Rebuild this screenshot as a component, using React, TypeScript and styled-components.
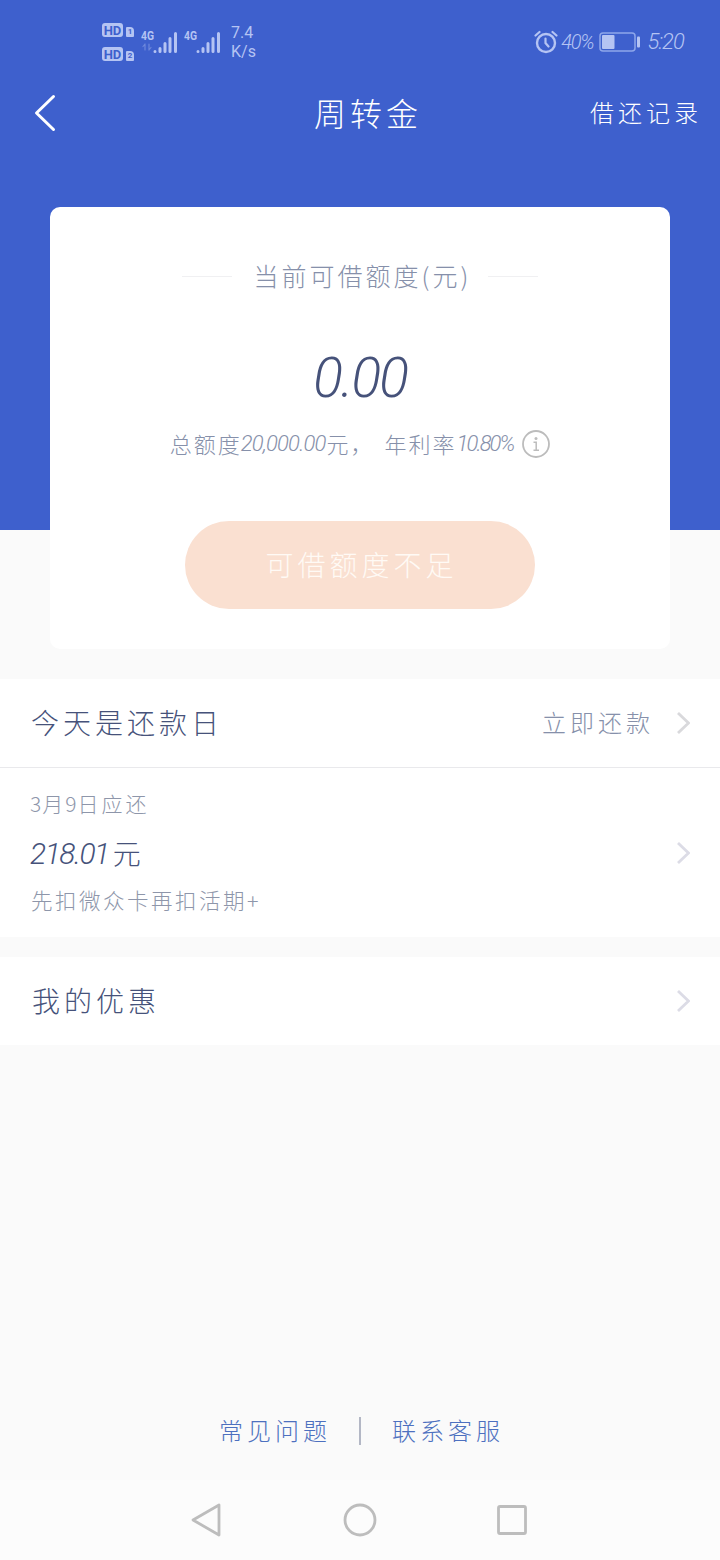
import React from "react";
import styled, { createGlobalStyle } from "styled-components";

const hand = '"Noto Sans CJK SC", sans-serif';

const GlobalStyle = createGlobalStyle`
  * { box-sizing: border-box; }
  body { margin: 0; background: #fafafa; font-family: ${hand}; font-weight: 300; }
  button { border: 0; background: none; padding: 0; font: inherit; color: inherit; }
  svg { display: block; flex: none; }
`;

const Page = styled.div`
  width: 720px;
  height: 1560px;
  display: flex;
  flex-direction: column;
  overflow: hidden;
`;

const Hero = styled.section`
  height: 679px;
  flex: none;
  background: linear-gradient(#3e60cd 530px, #fafafa 530px);
`;

/* A run of text: font size, tracking after every glyph, and space before it. */
const Text = styled.span<{ $size: number; $track?: number; $color?: string; $before?: number }>`
  font-size: ${(p) => p.$size}px;
  letter-spacing: ${(p) => p.$track ?? 0}px;
  color: ${(p) => p.$color ?? "inherit"};
  margin-left: ${(p) => p.$before ?? 0}px;
  padding-bottom: 2px;
  line-height: 1;
  white-space: pre;
`;

const Digits = styled(Text)`
  font-family: Roboto, sans-serif;
  font-style: italic;
  padding-bottom: 0;
`;

const StatusBar = styled.div`
  height: 80px;
  padding: 4px 36px 0 102px;
  display: flex;
  align-items: center;
  justify-content: space-between;
  color: #b5c4f3;
`;

const StatusGroup = styled.div`
  display: flex;
  align-items: center;
`;

const SignalGroup = styled.div`
  display: flex;
  gap: 6px;
`;

const Simcards = styled.div`
  display: flex;
  flex-direction: column;
  gap: 10px;
  margin-right: 7px;
`;

const SimRow = styled.div`
  display: flex;
  align-items: flex-end;
  gap: 3px;
`;

const Badge = styled.span<{ $small?: boolean }>`
  width: ${(p) => (p.$small ? 8 : 21)}px;
  height: ${(p) => (p.$small ? 10 : 14)}px;
  border-radius: ${(p) => (p.$small ? "1px 4px 1px 1px" : "3px")};
  background: #b5c4f3;
  color: #3e60cd;
  font: 700 ${(p) => (p.$small ? 8 : 13)}px/1 Roboto, sans-serif;
  display: flex;
  align-items: center;
  justify-content: center;
`;

const Speed = styled.div`
  margin-left: 10px;
  font: 400 16px/19px Roboto, sans-serif;
`;

const NavBar = styled.header`
  height: 68px;
  padding: 0 18px 2px 34px;
  display: grid;
  grid-template-columns: 1fr auto 1fr;
  align-items: center;
  color: #fff;
`;

const NavAction = styled.button`
  justify-self: end;
  display: flex;
`;

const Card = styled.div`
  width: 620px;
  height: 442px;
  margin: 59px auto 0;
  padding-top: 54px;
  border-radius: 10px;
  background: #fff;
  display: flex;
  flex-direction: column;
  align-items: center;
`;

const CardTitle = styled.div`
  height: 30px;
  width: 356px;
  display: flex;
  align-items: center;
  justify-content: space-between;
`;

const Rule = styled.i`
  width: 50px;
  height: 1px;
  background: #f0f0f2;
`;

const Balance = styled.div`
  height: 56px;
  margin-top: 59px;
  display: flex;
  align-items: center;
`;

const Terms = styled.div`
  height: 30px;
  margin-top: 23px;
  display: flex;
  align-items: center;
  color: #8690aa;
`;

const BorrowButton = styled.button`
  width: 350px;
  height: 88px;
  margin-top: 62px;
  border-radius: 44px;
  background: #fae0d1;
  color: #fffaf5;
  display: flex;
  align-items: center;
  justify-content: center;
`;

const Row = styled.div<{ $height: number; $line?: boolean }>`
  height: ${(p) => p.$height}px;
  flex: none;
  padding: 0 30px 0 31px;
  background: #fff;
  border-bottom: ${(p) => (p.$line ? "1px solid #e9e9ec" : "0")};
  display: flex;
  align-items: center;
  justify-content: space-between;
`;

const RowEnd = styled.div`
  display: flex;
  align-items: center;
  gap: 23px;
`;

const Due = styled.div`
  display: flex;
  flex-direction: column;
  gap: 21px;
  margin-left: -1px;
  color: #8e96aa;
`;

const DueLine = styled.div`
  height: 27px;
  display: flex;
  align-items: center;
`;

const Amount = styled(DueLine)`
  padding-top: 3px;
`;

const Gap = styled.div`
  height: 20px;
  flex: none;
`;

const Footer = styled.footer`
  margin-top: auto;
  height: 98px;
  flex: none;
  padding-left: 3px;
  display: flex;
  justify-content: center;
  align-items: center;
  gap: 30px;
  color: #4d70bf;
`;

const Divider = styled.i`
  width: 2px;
  height: 28px;
  margin-left: -2px;
  background: #b3b7c5;
`;

const SystemNav = styled.nav`
  height: 80px;
  flex: none;
  padding: 0 192px 0 190px;
  background: #fcfcfc;
  display: flex;
  align-items: center;
  justify-content: space-between;
`;

const Signal = ({ data }: { data?: boolean }) => (
  <svg width="37" height="26" viewBox="0 0 37 26" fill="none" stroke="#b5c4f3" strokeWidth="3" strokeLinecap="round">
    <text x="0" y="11" fill="#b5c4f3" stroke="none" fontFamily="Roboto" fontWeight="700" fontSize="13" textLength="13" lengthAdjust="spacingAndGlyphs">4G</text>
    {data && <path d="M4 15v6M2 17.500 4 15M8 15v6M10 18.500 8 21" strokeWidth="1.200" opacity=".4" />}
    <path d="M14 22.500v.1M19 19.500v3M24 14.500v8M29 9.500v13M34.500 4.500v18" />
  </svg>
);

const AlarmIcon = styled.svg`
  margin-right: 3px;
`;

const Alarm = () => (
  <AlarmIcon width="24" height="24" viewBox="0 0 24 24" fill="none" stroke="#b5c4f3" strokeWidth="2.4" strokeLinecap="round">
    <circle cx="12" cy="13" r="9" />
    <path d="M11.500 8.500v4.500l3 3.500M1.500 5.500 5.500 2M18.500 2l4 3.500" strokeWidth="2.200" />
  </AlarmIcon>
);

const BatteryIcon = styled.svg`
  margin: 0 6px;
`;

const Battery = () => (
  <BatteryIcon width="42" height="20" viewBox="0 0 42 20">
    <rect x="1" y="1" width="35" height="18" rx="3" fill="none" stroke="#8ea6ea" strokeWidth="1.500" />
    <rect x="3" y="3" width="12.500" height="14" rx="1" fill="#b5c4f3" />
    <rect x="38" y="4.500" width="3" height="11" rx="1" fill="#b5c4f3" />
  </BatteryIcon>
);

const Back = () => (
  <svg width="22" height="38" viewBox="0 0 22 38" fill="none" stroke="#fff" strokeWidth="3" strokeLinecap="round" strokeLinejoin="round">
    <path d="M19.500 2.500 2.500 19l17 16.500" />
  </svg>
);

const Chevron = ({ color = "#dcdce6" }: { color?: string }) => (
  <svg width="13" height="22" viewBox="0 0 13 22" fill="none" stroke={color} strokeWidth="2.800">
    <path d="M1 1l10.500 10L1 21" />
  </svg>
);

const InfoIcon = styled.svg`
  margin-left: 9px;
`;

const Info = () => (
  <InfoIcon width="28" height="28" viewBox="0 0 28 28">
    <circle cx="14" cy="14" r="13" fill="none" stroke="#bcbcbc" strokeWidth="1.800" />
    <circle cx="14" cy="8.500" r="1.500" fill="#bcbcbc" />
    <path d="M11.500 12.200H14.200V20M11.500 20.200H17" fill="none" stroke="#bcbcbc" strokeWidth="1.500" />
  </InfoIcon>
);

export default function App() {
  return (
    <Page>
      <GlobalStyle />
      <Hero>
        <StatusBar>
          <StatusGroup>
            <Simcards>
              <SimRow><Badge>HD</Badge><Badge $small>1</Badge></SimRow>
              <SimRow><Badge>HD</Badge><Badge $small>2</Badge></SimRow>
            </Simcards>
            <SignalGroup>
              <Signal data />
              <Signal />
            </SignalGroup>
            <Speed>7.4<br />K/s</Speed>
          </StatusGroup>
          <StatusGroup>
            <Alarm />
            <Digits $size={20} $track={-1.2}>40%</Digits>
            <Battery />
            <Digits $size={22} $track={-0.9}>5:20</Digits>
          </StatusGroup>
        </StatusBar>
        <NavBar>
          <Back />
          <Text $size={32} $track={4}>周转金</Text>
          <NavAction><Text $size={24} $track={4}>借还记录</Text></NavAction>
        </NavBar>
        <Card>
          <CardTitle>
            <Rule />
            <Text $size={25} $track={3} $before={5} $color="#8690aa">当前可借额度(元)</Text>
            <Rule />
          </CardTitle>
          <Balance><Digits $size={55} $track={-2} $color="#46527a">0.00</Digits></Balance>
          <Terms>
            <Text $size={22} $track={2}>总额度</Text>
            <Digits $size={22} $track={-0.8} $before={-1}>20,000.00</Digits>
            <Text $size={22} $track={2} $before={1}>元，</Text>
            <Text $size={22} $track={2} $before={10}>年利率</Text>
            <Digits $size={22} $track={-1.9}>10.80%</Digits>
            <Info />
          </Terms>
          <BorrowButton><Text $size={28} $track={4} $before={3}>可借额度不足</Text></BorrowButton>
        </Card>
      </Hero>
      <Row $height={89} $line>
        <Text $size={28} $track={4} $color="#46527a">今天是还款日</Text>
        <RowEnd>
          <Text $size={24} $track={4} $color="#8690aa">立即还款</Text>
          <Chevron color="#d9d9dc" />
        </RowEnd>
      </Row>
      <Row $height={169}>
        <Due>
          <DueLine>
            <Text $size={21}>3</Text>
            <Text $size={21} $before={1}>月</Text>
            <Text $size={21} $before={2}>9</Text>
            <Text $size={21} $track={3} $before={1}>日应还</Text>
          </DueLine>
          <Amount>
            <Digits $size={30} $track={-1.5} $color="#46527a">218.01</Digits>
            <Text $size={28} $before={4} $color="#46527a">元</Text>
          </Amount>
          <DueLine><Text $size={21.5} $track={2.500} $before={1}>先扣微众卡再扣活期+</Text></DueLine>
        </Due>
        <Chevron />
      </Row>
      <Gap />
      <Row $height={88}>
        <Text $size={28} $track={4} $before={1} $color="#46527a">我的优惠</Text>
        <Chevron />
      </Row>
      <Footer>
        <Text $size={24} $track={4}>常见问题</Text>
        <Divider />
        <Text $size={24} $track={4} $before={1}>联系客服</Text>
      </Footer>
      <SystemNav>
        <svg width="34" height="36" viewBox="0 0 34 36" fill="none" stroke="#bdbdbd" strokeWidth="2.800" strokeLinejoin="round">
          <path d="M29 3v30L3 18z" />
        </svg>
        <svg width="34" height="34" viewBox="0 0 34 34" fill="none" stroke="#bdbdbd" strokeWidth="2.800">
          <circle cx="17" cy="17" r="15" />
        </svg>
        <svg width="32" height="32" viewBox="0 0 32 32" fill="none" stroke="#bdbdbd" strokeWidth="2.800">
          <rect x="2.500" y="2.500" width="27" height="27" rx="1.500" />
        </svg>
      </SystemNav>
    </Page>
  );
}
